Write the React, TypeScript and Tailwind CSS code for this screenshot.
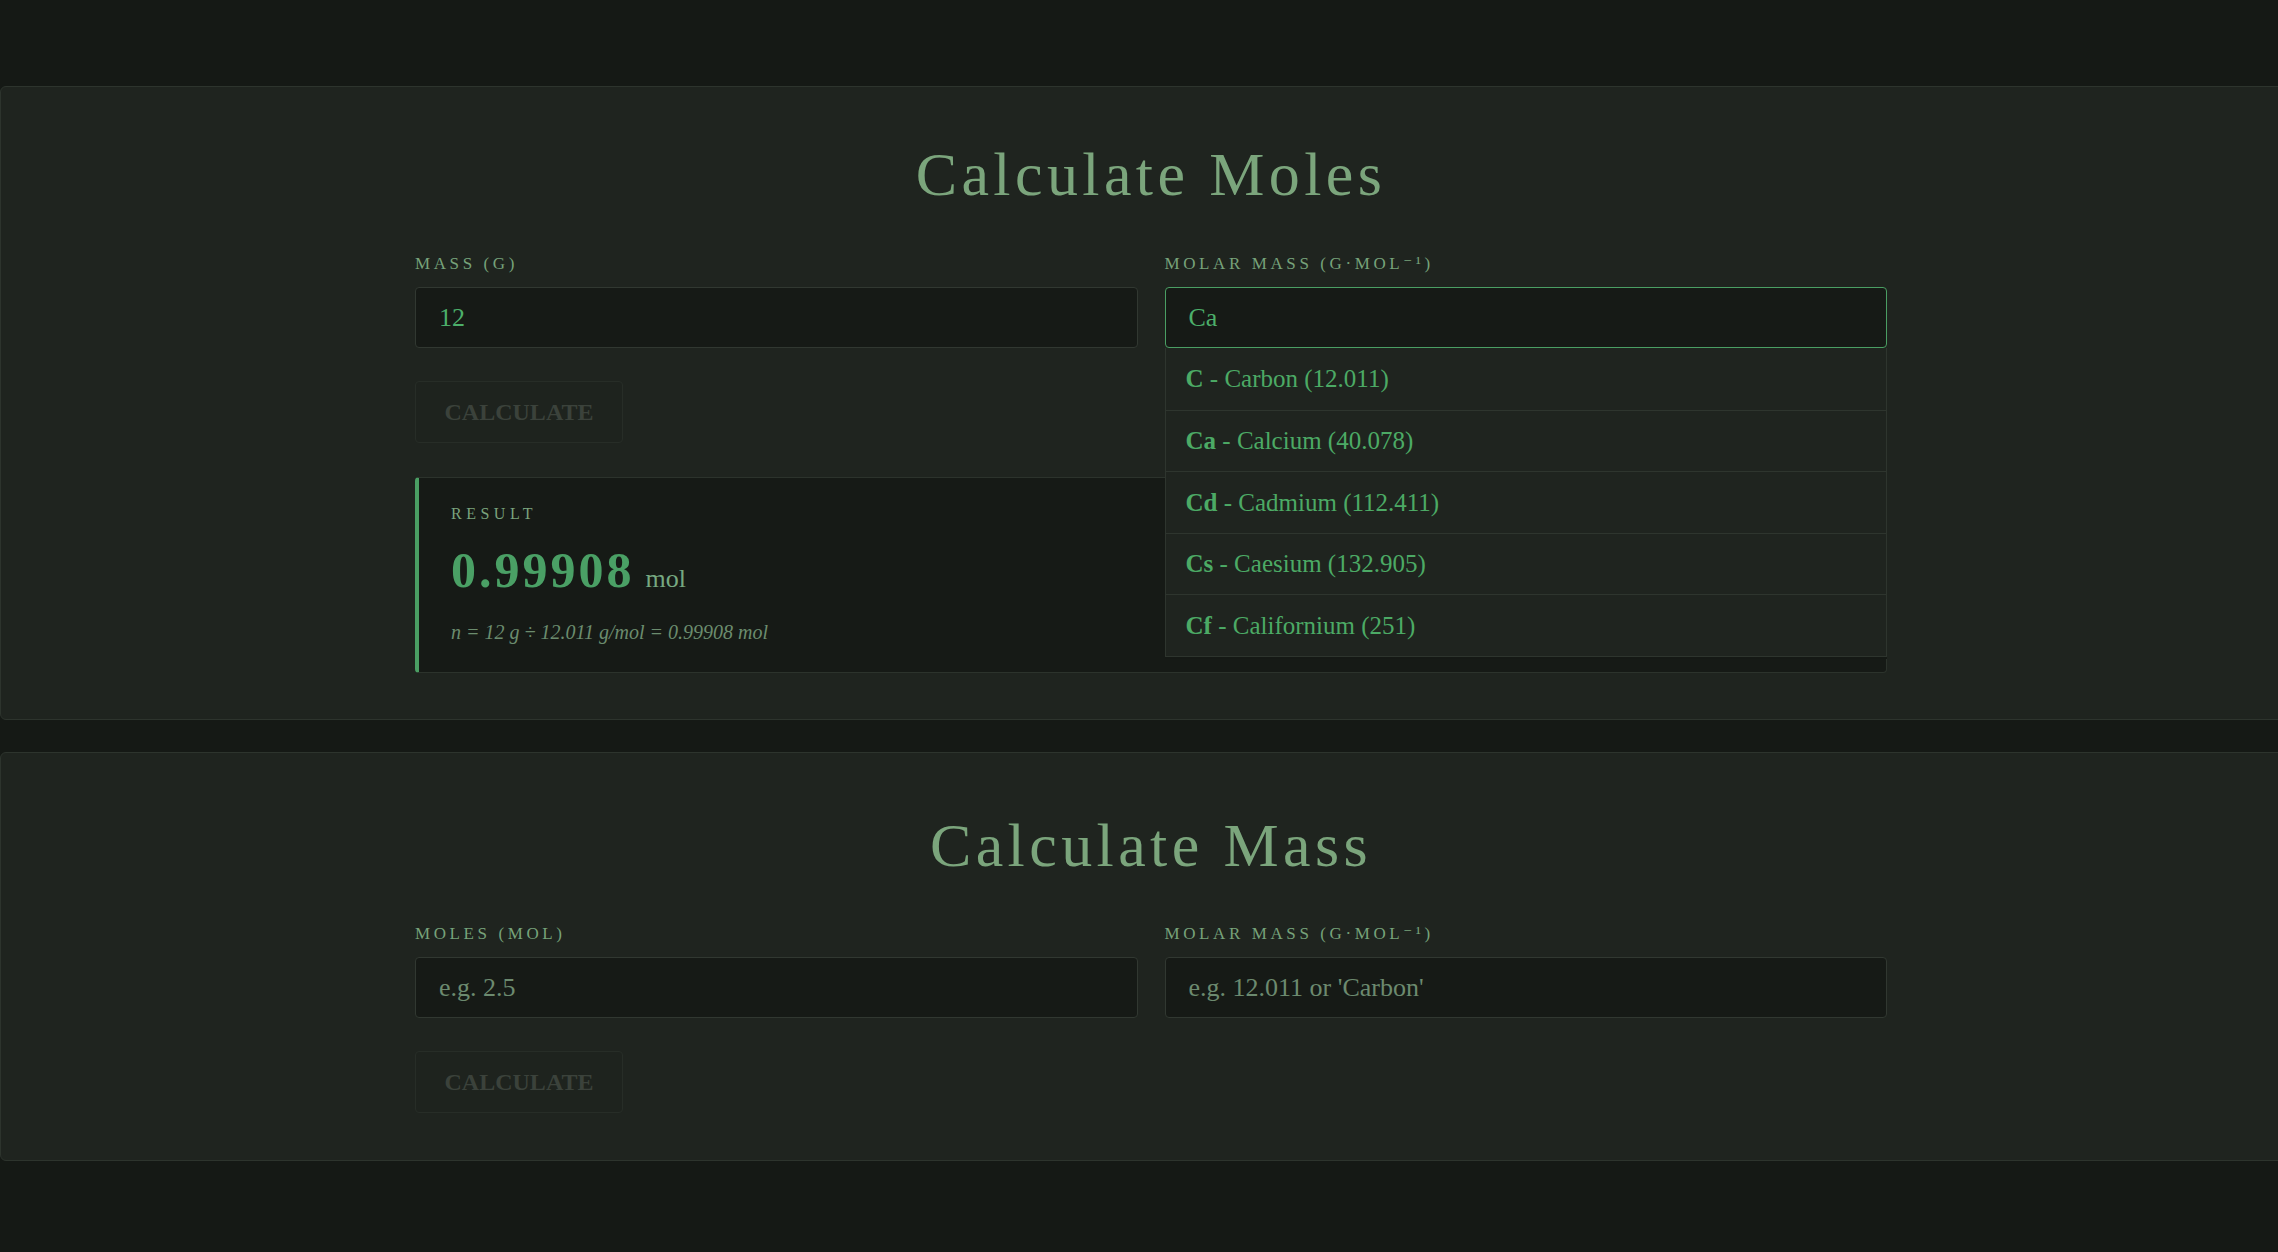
import React from 'react'

type Element = { symbol: string; name: string; mass: string }

const suggestions: Element[] = [
  { symbol: 'C', name: 'Carbon', mass: '12.011' },
  { symbol: 'Ca', name: 'Calcium', mass: '40.078' },
  { symbol: 'Cd', name: 'Cadmium', mass: '112.411' },
  { symbol: 'Cs', name: 'Caesium', mass: '132.905' },
  { symbol: 'Cf', name: 'Californium', mass: '251' },
]

function FieldLabel({ children }: { children: React.ReactNode }) {
  return <label className="block text-[17px] leading-none tracking-[3.6px] text-[#76a27a]">{children}</label>
}

function TextField({
  label,
  value,
  placeholder,
  focused,
  children,
}: {
  label: string
  value?: string
  placeholder?: string
  focused?: boolean
  children?: React.ReactNode
}) {
  return (
    <div className="relative">
      <FieldLabel>{label}</FieldLabel>
      <input
        readOnly
        value={value ?? ''}
        placeholder={placeholder}
        className={`mt-[15px] block h-[61px] w-full rounded-[4px] border bg-[#161a16] pl-[23px] text-[26px] text-[#4caf6a] outline-none placeholder:text-[#6c8a6f] ${
          focused ? 'border-[#4a9e63]' : 'border-[#313831]'
        }`}
      />
      {children}
    </div>
  )
}

function CalcButton() {
  return (
    <button className="mt-[33px] flex h-[62px] w-[208px] items-center justify-center rounded-[4px] border border-[#272d27] bg-[#1e231e] text-[24px] font-bold leading-none text-[#3b423b]">
      CALCULATE
    </button>
  )
}

function Dropdown() {
  return (
    <ul className="absolute left-0 right-0 top-full z-10 border-x border-b border-[#2e352e] bg-[#1f241f] shadow-[0_2px_0_#151915]">
      {suggestions.map((el) => (
        <li
          key={el.symbol}
          className="flex h-[61.5px] items-center border-t border-[#2e352e] pl-[20px] text-[25px] leading-none text-[#4caa65] first:border-t-0"
        >
          <b className="font-bold">{el.symbol}</b>
          <span className="whitespace-pre">{` - ${el.name} (${el.mass})`}</span>
        </li>
      ))}
    </ul>
  )
}

function ResultCard() {
  return (
    <div className="mt-[34px] rounded-[4px] border border-l-4 border-[#2c332c] border-l-[#4a9e63] bg-[#161a16] pb-[30px] pl-[32px] pt-[28px]">
      <p className="text-[16px] leading-none tracking-[4.5px] text-[#7aa37d]">RESULT</p>
      <p className="mt-[23px] flex items-baseline leading-none">
        <span className="text-[50px] font-bold tracking-[3px] text-[#4aa065]">0.99908</span>
        <span className="ml-[11px] text-[26px] text-[#76a981]">mol</span>
      </p>
      <p className="mt-[27px] text-[20px] italic leading-none text-[#6b8c6e]">n = 12 g ÷ 12.011 g/mol = 0.99908 mol</p>
    </div>
  )
}

export default function App() {
  return (
    <div className="min-h-screen overflow-x-hidden bg-[#151915] pt-[86px] font-['Liberation_Serif','DejaVu_Serif',serif]">
      <section className="mr-[-24px] rounded-[6px] border border-[#2d342d] bg-[#1f241f] px-[414px] pb-[46px] pt-[56px]">
        <h2 className="text-center text-[62px] leading-none tracking-[4.4px] text-[#7ba57c]">Calculate Moles</h2>
        <div className="mt-[50px] grid grid-cols-2 gap-[27px]">
          <TextField label="MASS (G)" value="12" />
          <TextField label="MOLAR MASS (G·MOL⁻¹)" value="Ca" focused>
            <Dropdown />
          </TextField>
        </div>
        <CalcButton />
        <ResultCard />
      </section>

      <section className="mr-[-24px] mt-[32px] rounded-[6px] border border-[#2d342d] bg-[#1f241f] px-[414px] pb-[47px] pt-[61px]">
        <h2 className="text-center text-[62px] leading-none tracking-[4.4px] text-[#7ba57c]">Calculate Mass</h2>
        <div className="mt-[49px] grid grid-cols-2 gap-[27px]">
          <TextField label="MOLES (MOL)" placeholder="e.g. 2.5" />
          <TextField label="MOLAR MASS (G·MOL⁻¹)" placeholder="e.g. 12.011 or 'Carbon'" />
        </div>
        <CalcButton />
      </section>
    </div>
  )
}
